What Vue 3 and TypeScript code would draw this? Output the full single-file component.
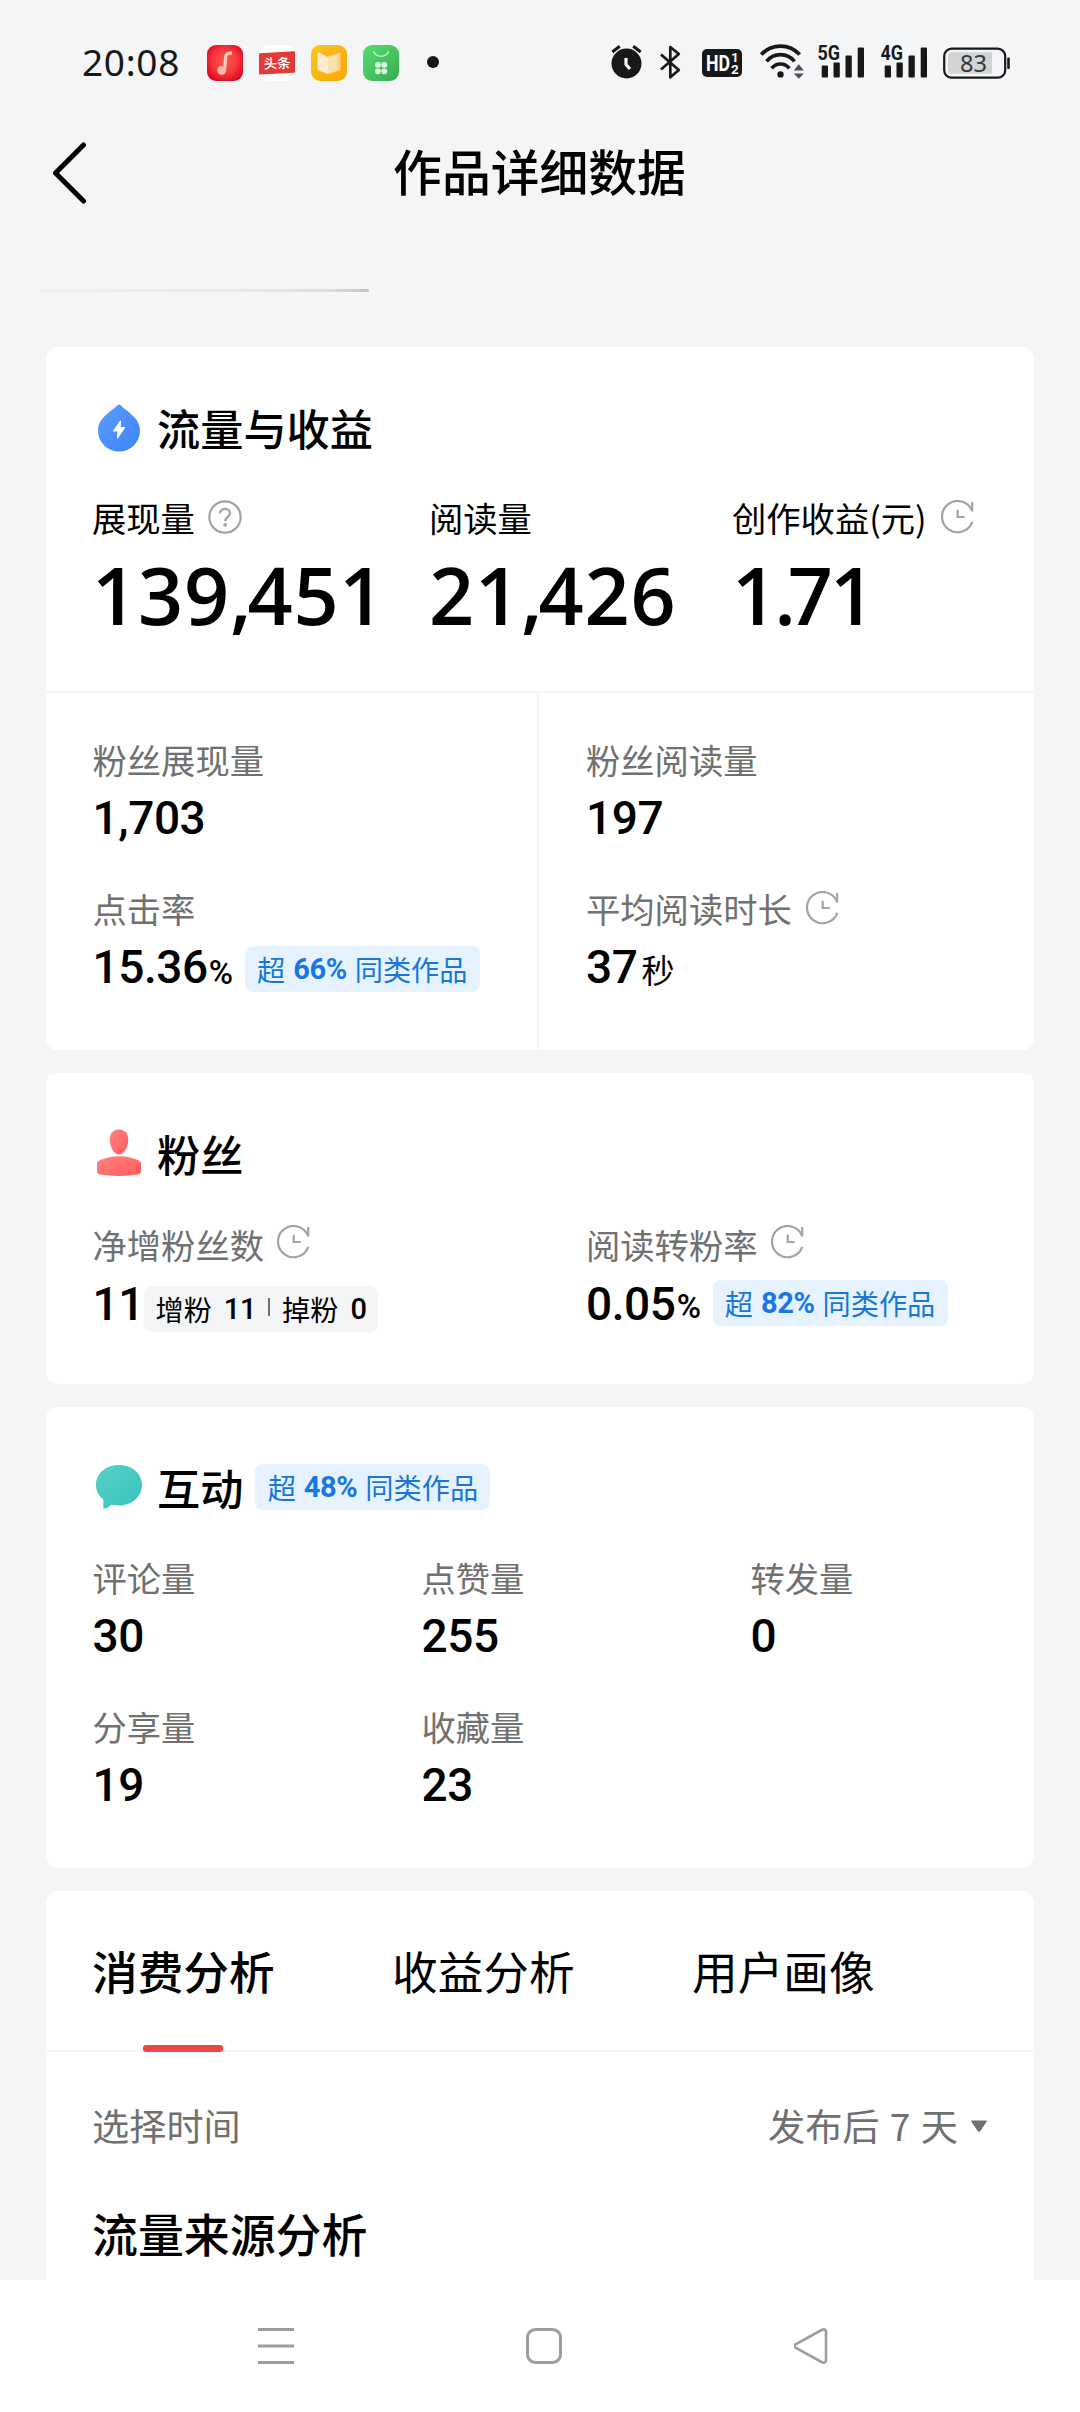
<script setup lang="ts">
interface Stat {
  label: string
  value: string
}

const interactions: Stat[] = [
  { label: '评论量', value: '30' },
  { label: '点赞量', value: '255' },
  { label: '转发量', value: '0' },
  { label: '分享量', value: '19' },
  { label: '收藏量', value: '23' },
]

const tabs: string[] = ['消费分析', '收益分析', '用户画像']
const activeTab = 0
</script>

<template>
  <div class="screen">
    <svg class="defs" width="0" height="0" aria-hidden="true">
      <symbol id="clock" viewBox="0 0 34 34">
        <g fill="none" stroke="#a3a3a3" stroke-width="2.2">
          <path d="M31.3 21.8A15.6 15.6 0 1 1 31 10.6" />
          <path d="M31.2 2v9.6" />
          <path d="M16.7 9.8v7.2h7" />
        </g>
      </symbol>
    </svg>

    <div class="status">
      <span class="time">20:08</span>
      <div class="apps">
        <svg width="36" height="36" viewBox="0 0 36 36">
          <defs>
            <radialGradient id="red" cx=".5" cy=".45" r=".65">
              <stop offset="0" stop-color="#ff5a50" />
              <stop offset=".55" stop-color="#f6353c" />
              <stop offset="1" stop-color="#d5001f" />
            </radialGradient>
          </defs>
          <rect width="36" height="36" rx="9" fill="url(#red)" />
          <path d="M25 8.200c-4.500-.2-6 1-6.300 3.800L17.600 25" fill="none" stroke="#ffc9ba" stroke-width="3.200" />
          <circle cx="14.700" cy="25.300" r="4.500" fill="#ffb6a4" />
        </svg>
        <svg width="36" height="36" viewBox="0 0 36 36">
          <rect width="36" height="36" rx="9" fill="#fff" />
          <path d="M.8 8.200 35.200 6.300q.8 0 .8.800V27q0 .800-.800.800L.8 29.500Q0 29.500 0 28.700V9q0-.700.8-.8z" fill="#e33a37" />
          <text x="4.500" y="23.300" font-size="13.500" font-weight="500" fill="#fff" textLength="27" transform="rotate(-2 18 18)" class="cjk">头条</text>
        </svg>
        <svg width="36" height="36" viewBox="0 0 36 36">
          <defs>
            <linearGradient id="yel" x1="0" y1="0" x2="1" y2="1">
              <stop offset="0" stop-color="#fbc324" />
              <stop offset="1" stop-color="#f7a800" />
            </linearGradient>
          </defs>
          <rect width="36" height="36" rx="9" fill="url(#yel)" />
          <path d="M18 12.500 28 7.800q1.500-.5 1.500 1V24q0 1-1 1.400L18 29z" fill="#f8d08c" />
          <path d="M17 12 8 7.500q-1.500-.5-1.500 1V24q0 1 1 1.400L17 29l8.500-4V9z" fill="#fdeccb" />
          <path d="M17 12v17l8.500-4V9z" fill="#fbdfae" />
        </svg>
        <svg width="36" height="36" viewBox="0 0 36 36">
          <defs>
            <linearGradient id="grn" x1="0" y1="0" x2="1" y2="1">
              <stop offset="0" stop-color="#55de70" />
              <stop offset="1" stop-color="#35ad4e" />
            </linearGradient>
          </defs>
          <rect width="36" height="36" rx="9" fill="url(#grn)" />
          <path d="M10.500 6a7.800 7.200 0 0 0 15 0" fill="none" stroke="#c5f5ca" stroke-width="1.300" />
          <g fill="#d9f8dc">
            <rect x="12" y="17" width="5.800" height="5.800" rx="2.400" />
            <rect x="18.400" y="17" width="5.800" height="5.800" rx="2.400" />
            <rect x="12" y="23.400" width="5.800" height="5.800" rx="2.400" />
            <rect x="18.400" y="23.400" width="5.800" height="5.800" rx="2.400" />
          </g>
        </svg>
      </div>
      <span class="dot"></span>

      <div class="signals">
        <svg width="31" height="36" viewBox="0 0 31 36">
          <circle cx="15.500" cy="19.500" r="15" fill="#16181a" />
          <path d="M1.300 8 8.800 2.200M29.700 8l-7.500-5.800" stroke="#16181a" stroke-width="3" fill="none" />
          <path d="M15 14v6.500l4 4.500" stroke="#f4f5f7" stroke-width="3.200" fill="none" />
        </svg>
        <svg class="bt" width="21" height="36" viewBox="0 0 21 36">
          <path d="M1 10.500 18.800 26 10.300 33.300V3L18.800 10 1 25.500" fill="none" stroke="#16181a" stroke-width="2.700" stroke-linejoin="round" />
        </svg>
        <svg class="hd" width="40" height="36" viewBox="0 0 40 36">
          <rect y="5" width="40" height="28" rx="5" fill="#16181a" />
          <g fill="#fff" font-weight="700" class="roboto">
            <text x="4" y="26.500" font-size="21.500" textLength="24" lengthAdjust="spacingAndGlyphs">HD</text>
            <text x="29" y="18" font-size="13.500">1</text>
            <text x="29" y="30" font-size="13.500">2</text>
          </g>
        </svg>
        <svg class="wifi" width="45" height="36" viewBox="0 0 45 36">
          <g fill="none" stroke="#16181a" stroke-width="3.700">
            <path d="M1.300 10.600a25.900 25.900 0 0 1 38.400 0" />
            <path d="M6.500 17.400a17.800 17.800 0 0 1 28 0" />
            <path d="M11.700 24.400a11 11 0 0 1 17.600 0" />
          </g>
          <circle cx="20.500" cy="30.400" r="3.200" fill="#16181a" />
          <path d="M38.800 20.200 43.800 26.400h-10zM38.800 34.800l5-5.300h-10z" fill="#4b4d50" />
        </svg>
        <svg v-for="net in ['5G', '4G']" :key="net" class="net" width="47" height="44" viewBox="0 -4 47 44">
          <g fill="#16181a">
            <text x="-.5" y="16.200" font-size="21" font-weight="700" textLength="22.500" lengthAdjust="spacingAndGlyphs" class="roboto">{{ net }}</text>
            <rect x="3.700" y="21.500" width="6.300" height="12" rx="1" />
            <rect x="15.500" y="18.500" width="6.300" height="15" rx="1" />
            <rect x="27.500" y="11.500" width="6.300" height="22" rx="1" />
            <rect x="39.700" y="3.500" width="6.300" height="30" rx="1" />
          </g>
        </svg>
        <svg class="battery" width="67" height="36" viewBox="0 0 67 36">
          <rect x="1.200" y="4.700" width="61" height="29" rx="7.500" fill="#f4f5f7" stroke="#16181a" stroke-width="2.200" />
          <path d="M9 8.300h40v21.500H9q-4 0-4-4V12.300q0-4 4-4z" fill="#d2d3d5" />
          <rect x="64.200" y="13.500" width="2.600" height="11.500" rx="1" fill="#16181a" />
          <text x="17" y="27.700" font-size="23.500" fill="#34363a" class="noto">83</text>
        </svg>
      </div>
    </div>

    <header class="header">
      <svg class="back" width="36" height="64" viewBox="0 0 36 64">
        <path d="M31.500 4 3.500 32l28 28" fill="none" stroke="#000" stroke-width="5" stroke-linecap="round" stroke-linejoin="round" />
      </svg>
      <h1>作品详细数据</h1>
    </header>

    <div class="strip"><span></span></div>

    <main>
      <section class="card traffic">
        <div class="title">
          <svg width="48" height="50" viewBox="0 0 48 50">
            <defs>
              <linearGradient id="drop" x1="0" y1="0" x2="1" y2="1">
                <stop offset="0" stop-color="#5c9dff" />
                <stop offset="1" stop-color="#3d83f7" />
              </linearGradient>
            </defs>
            <path d="M24 2.500q1.200 0 2.500 1.500C33 10.500 45 16 45 28.600a21 21 0 0 1-42 0C3 16 15 10.500 21.500 4Q22.800 2.500 24 2.500z" fill="url(#drop)" />
            <path d="M25.500 19 18.500 29h4.600L22.500 36l7.200-10.500h-4.700z" fill="#fff" stroke="#fff" stroke-width="1.200" stroke-linejoin="round" />
          </svg>
          <h2>流量与收益</h2>
        </div>
        <div class="headline">
          <div class="big">
            <div class="label dark">
              展现量
              <svg class="help" width="34" height="34" viewBox="0 0 34 34">
                <circle cx="17" cy="17" r="15.700" fill="none" stroke="#a3a3a3" stroke-width="2.200" />
                <path d="M12 13.500c0-3 2.200-4.700 5-4.700s5 1.800 5 4.400c0 3.400-4.800 4-4.800 8" fill="none" stroke="#a3a3a3" stroke-width="2.300" />
                <circle cx="17.100" cy="24.800" r="1.900" fill="#a3a3a3" />
              </svg>
            </div>
            <div class="number">139<span class="comma">,</span>451</div>
          </div>
          <div class="big">
            <div class="label dark">阅读量</div>
            <div class="number">21<span class="comma">,</span>426</div>
          </div>
          <div class="big">
            <div class="label dark">
              创作收益(元)
              <svg class="clock wide" width="34" height="34"><use href="#clock" /></svg>
            </div>
            <div class="number tight">1<span class="point">.</span>71</div>
          </div>
        </div>
        <div class="split">
          <div class="half">
            <div class="label">粉丝展现量</div>
            <div class="value">1,703</div>
            <div class="label next">点击率</div>
            <div class="value">
              15.36<small class="low">%</small>
              <span class="tag low"><i>超</i><b>66%</b><i>同类作品</i></span>
            </div>
          </div>
          <div class="half">
            <div class="label">粉丝阅读量</div>
            <div class="value">197</div>
            <div class="label next">
              平均阅读时长
              <svg class="clock" width="34" height="34"><use href="#clock" /></svg>
            </div>
            <div class="value">37<small class="unit">秒</small></div>
          </div>
        </div>
      </section>

      <section class="card fans">
        <div class="title">
          <svg width="48" height="50" viewBox="0 0 48 50">
            <defs>
              <linearGradient id="fan" x1="0" y1="0" x2="1" y2="1">
                <stop offset="0" stop-color="#ff8583" />
                <stop offset="1" stop-color="#ff5a58" />
              </linearGradient>
            </defs>
            <path d="M24 1.500c6 0 9.300 4.300 9.300 10 0 6.500-3.800 15-9.300 15s-9.300-8.500-9.300-15c0-5.700 3.300-10 9.300-10z" fill="url(#fan)" />
            <path d="M2 35.500q0-1.500 1.300-2.400Q12 28.300 24 28.300t20.700 4.800q1.300.9 1.300 2.400v8q0 2.200-2.200 2.700Q35 48 24 48T4.200 46.200Q2 45.700 2 43.500z" fill="url(#fan)" />
          </svg>
          <h2>粉丝</h2>
        </div>
        <div class="pair">
          <div class="half">
            <div class="label">
              净增粉丝数
              <svg class="clock" width="34" height="34"><use href="#clock" /></svg>
            </div>
            <div class="value">
              11
              <span class="tag gray"><i>增粉</i><b>11</b><span class="bar"></span><i>掉粉</i><b>0</b></span>
            </div>
          </div>
          <div class="half">
            <div class="label">
              阅读转粉率
              <svg class="clock" width="34" height="34"><use href="#clock" /></svg>
            </div>
            <div class="value">
              0.05<small>%</small>
              <span class="tag"><i>超</i><b>82%</b><i>同类作品</i></span>
            </div>
          </div>
        </div>
      </section>

      <section class="card interact">
        <div class="title">
          <svg width="48" height="50" viewBox="0 0 48 50">
            <defs>
              <linearGradient id="talk" x1="0" y1="0" x2="1" y2="1">
                <stop offset="0" stop-color="#5bd0ca" />
                <stop offset="1" stop-color="#35c2bd" />
              </linearGradient>
            </defs>
            <path d="M24 3c13 0 23 8.500 23 20S37 43.500 24 43.500c-3 0-5.400-.3-7.500-.9q-2 2.600-7.500 4.400-.7 0-.7-.7V37.500C3.800 34 1 29 1 23 1 11.500 11 3 24 3z" fill="url(#talk)" />
          </svg>
          <h2>互动</h2>
          <span class="tag"><i>超</i><b>48%</b><i>同类作品</i></span>
        </div>
        <div class="grid">
          <div v-for="item in interactions" :key="item.label" class="cell">
            <div class="label">{{ item.label }}</div>
            <div class="value">{{ item.value }}</div>
          </div>
        </div>
      </section>

      <section class="card analysis">
        <nav class="tabs">
          <div v-for="(tab, i) in tabs" :key="tab" class="tab" :class="{ active: i === activeTab }">{{ tab }}</div>
        </nav>
        <div class="period">
          <span>选择时间</span>
          <span class="pick">
            发布后 7 天
            <svg width="18" height="13" viewBox="0 0 18 13">
              <path d="M1.500 1h15L9.900 11q-.9.900-1.800 0z" fill="#707070" stroke="#707070" stroke-linejoin="round" />
            </svg>
          </span>
        </div>
        <h3>流量来源分析</h3>
      </section>
    </main>

    <footer class="sysnav">
      <svg width="36" height="38" viewBox="0 0 36 38">
        <path d="M0 2.500h36M0 19h36M0 35.500h36" stroke="#9d9d9d" stroke-width="3" />
      </svg>
      <svg width="36" height="38" viewBox="0 0 36 38">
        <rect x="1.500" y="2.500" width="33" height="33" rx="8" fill="none" stroke="#9d9d9d" stroke-width="3" />
      </svg>
      <svg width="36" height="38" viewBox="0 0 36 38">
        <path d="M1.500 17.300 28 2.800q4-1.500 4 2.200v28q0 3.700-4 2.200L1.500 20.700q-2.200-1.700 0-3.400z" fill="none" stroke="#9d9d9d" stroke-width="2.600" />
      </svg>
    </footer>
  </div>
</template>

<style>
body {
  background: #f4f5f7;
}
</style>

<style scoped>
.screen {
  width: 1080px;
  height: 2412px;
  overflow: hidden;
  display: flex;
  flex-direction: column;
  background: #f4f5f7;
  color: #000;
  font-family: 'Noto Sans CJK SC', sans-serif;
}
.screen svg {
  flex: none;
  display: block;
}
.screen .defs {
  position: absolute;
}
.roboto {
  font-family: Roboto, sans-serif;
}
.noto {
  font-family: 'Noto Sans', sans-serif;
}
.cjk {
  font-family: 'Noto Sans CJK SC', sans-serif;
}
h1,
h2,
h3 {
  margin: 0;
  font-weight: 500;
}

/* status bar */
.status {
  flex: none;
  height: 124px;
  display: flex;
  align-items: center;
  padding: 0 70px 0 82px;
}
.time {
  width: 125px;
  font: 37px/50px 'Noto Sans', sans-serif;
  letter-spacing: 0.7px;
  color: #16181a;
}
.apps {
  display: flex;
  gap: 16px;
  padding-top: 2px;
}
.dot {
  width: 12px;
  height: 12px;
  margin-left: 28px;
  border-radius: 50%;
  background: #16181a;
}
.signals {
  margin-left: auto;
  display: flex;
  align-items: center;
}
.bt {
  margin-left: 18px;
}
.hd {
  margin-left: 21px;
}
.wifi {
  margin-left: 18px;
}
.net {
  margin-left: 13px;
}
.net + .net {
  margin-left: 16px;
}
.battery {
  margin-left: 15px;
}

/* page header */
.header {
  flex: none;
  height: 98px;
  display: flex;
  align-items: center;
  padding: 0 52px;
}
h1 {
  flex: 1;
  margin-right: 37px;
  text-align: center;
  font-size: 48.8px;
  line-height: 92px;
  padding-bottom: 6px;
}
.strip {
  flex: none;
  height: 58px;
  padding: 67px 0 0 40px;
}
.strip span {
  display: block;
  width: 329px;
  height: 3px;
  border-radius: 0 2px 2px 0;
  background: linear-gradient(90deg, rgba(225, 226, 228, 0.3), rgba(222, 223, 225, 0.6) 60%, #dcdddf 88%, #c2c3c5);
}

/* cards */
main {
  flex: none;
  height: 1933px;
  overflow: hidden;
  padding: 0 46px;
}
.card {
  box-sizing: border-box;
  background: #fff;
  border-radius: 12px;
  padding-top: 50px;
}
.traffic {
  height: 703px;
}
.fans {
  height: 311px;
  margin-top: 23px;
}
.interact {
  height: 461px;
  margin-top: 23px;
}
.analysis {
  height: 600px;
  margin-top: 23px;
  padding-top: 0;
}
.title {
  height: 60px;
  display: flex;
  align-items: center;
  padding-left: 49px;
}
h2 {
  margin-left: 14px;
  font-size: 43.2px;
  line-height: 60px;
}
.label {
  display: flex;
  align-items: center;
  height: 40px;
  font-size: 34.3px;
  line-height: 40px;
  white-space: nowrap;
  color: #707070;
}
.label.dark {
  color: #000;
}
.help,
.clock {
  margin-left: 14px;
  margin-bottom: 1px;
}
.help {
  margin-left: 13px;
}
.fans .clock {
  margin-left: 13px;
  margin-bottom: 4px;
}
.headline {
  display: flex;
  padding: 40px 0 56px 46px;
}
.big:nth-child(1) {
  width: 337px;
}
.big:nth-child(2) {
  width: 303px;
}
.number {
  margin-top: 18px;
  font: 600 79px/80px 'Open Sans', 'Noto Sans', sans-serif;
  letter-spacing: 0.8px;
}
.number .comma {
  letter-spacing: -4px;
}
.number.tight {
  letter-spacing: -3px;
}
.number .point {
  letter-spacing: -8px;
}
.split {
  display: flex;
  height: 357px;
  border-top: 2px solid #f6f6f7;
}
.split .half {
  box-sizing: border-box;
  padding-top: 46px;
}
.split .half:first-child {
  border-right: 2px solid #f6f6f7;
}
.half {
  padding-left: 47px;
}
.half:first-child {
  box-sizing: border-box;
  width: 493px;
  padding-left: 46.500px;
}
.label.next {
  margin-top: 45px;
}
.value {
  display: flex;
  align-items: center;
  height: 50px;
  margin-top: 14px;
  font: 500 46px/50px Roboto, sans-serif;
  letter-spacing: -0.4px;
  white-space: nowrap;
}
.value small {
  margin-left: 1px;
  margin-top: 6px;
  font-size: 33px;
  line-height: 40px;
}
.value small.low {
  margin-top: 12px;
}
.value small.unit {
  margin: 4px 0 0 4px;
  font: 400 33px/40px 'Noto Sans CJK SC', sans-serif;
}
.tag {
  box-sizing: border-box;
  display: flex;
  align-items: center;
  justify-content: center;
  gap: 8px;
  width: 235px;
  height: 46px;
  margin: -2px 0 0 12px;
  border-radius: 8px;
  background: #e6f2fd;
  color: #1677d9;
  letter-spacing: 0;
}
.tag.low {
  margin-top: 4px;
}
.tag i {
  font: 400 28.2px/42px 'Noto Sans CJK SC', sans-serif;
}
.tag b {
  font: 700 29px/42px Roboto, sans-serif;
  letter-spacing: -0.4px;
  color: #1877e6;
}
.tag.gray {
  width: 234px;
  margin: 9px 0 0 0;
  gap: 12px;
  background: #f4f5f7;
  color: #000;
}
.tag.gray b {
  font-weight: 500;
  color: #000;
}
.bar {
  width: 2px;
  height: 18px;
  background: #707070;
  margin-top: -3px;
}
.interact .title .tag {
  margin: 0 0 0 12px;
}
.pair {
  display: flex;
  padding-top: 41px;
}
.pair .value {
  margin-top: 15px;
}
.grid {
  display: grid;
  grid-template-columns: 329px 329px 1fr;
  row-gap: 45px;
  padding: 40px 0 0 46.500px;
}

/* analysis */
.tabs {
  display: flex;
  height: 159px;
  padding-left: 46px;
  border-bottom: 2px solid #f4f5f6;
}
.tab {
  position: relative;
  width: 300px;
  font-size: 45.7px;
  line-height: 158px;
}
.tab.active {
  font-weight: 500;
}
.tab.active::after {
  content: '';
  position: absolute;
  left: 51px;
  bottom: -2px;
  width: 80px;
  height: 7px;
  border-radius: 3px;
  background: #ee4545;
}
.period {
  display: flex;
  justify-content: space-between;
  align-items: center;
  height: 50px;
  margin-top: 48px;
  padding: 0 46px 0 46px;
  font-size: 37.2px;
  line-height: 50px;
  color: #707070;
}
.pick {
  display: flex;
  align-items: center;
  gap: 12px;
  word-spacing: 2px;
}
.pick svg {
  margin-top: 3px;
}
h3 {
  margin: 52px 0 0 46px;
  font-size: 45.9px;
  line-height: 60px;
}

/* system navigation */
.sysnav {
  flex: none;
  box-sizing: border-box;
  display: flex;
  height: 132px;
  padding: 47px 0 0 258px;
  gap: 232px;
  background: #fff;
}
</style>
